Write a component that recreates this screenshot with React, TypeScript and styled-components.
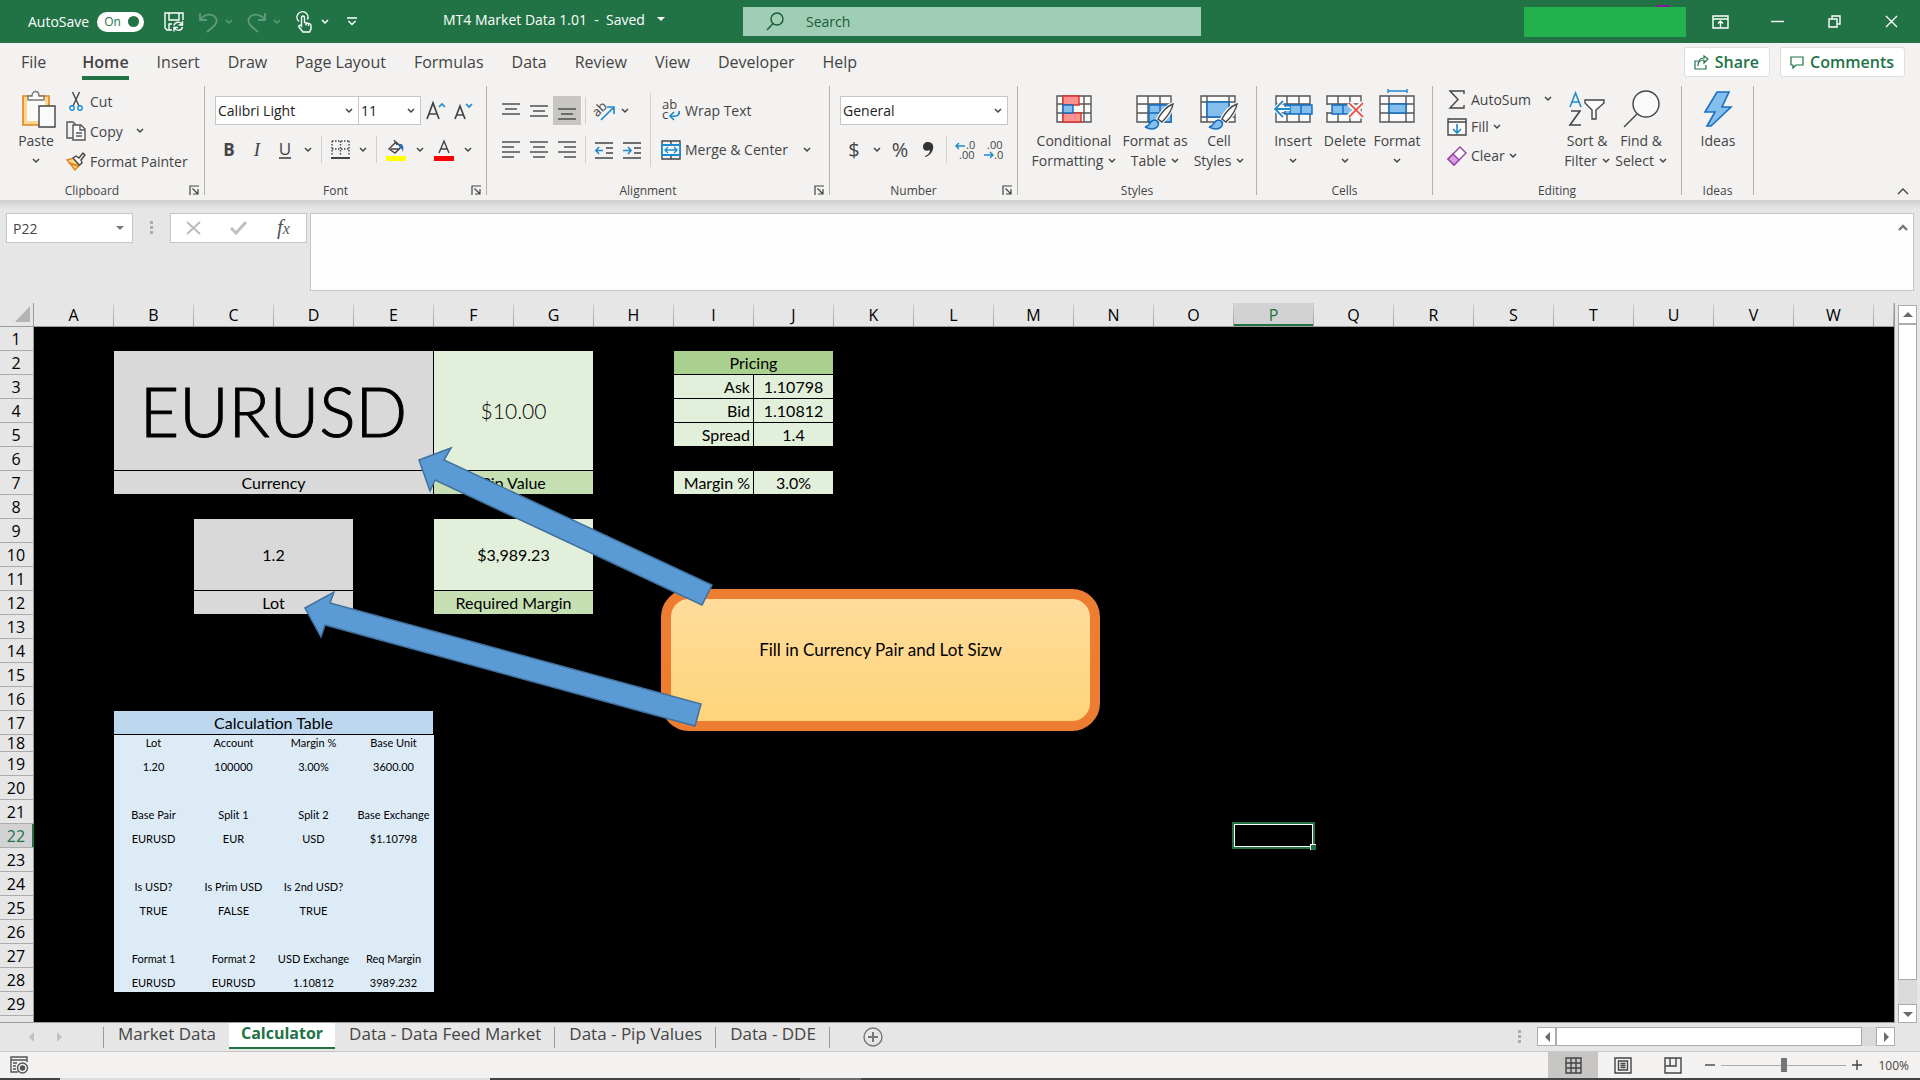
import React from "react";
import styled, { createGlobalStyle, css } from "styled-components";

const UI = `"Open Sans", "Noto Sans", sans-serif`;
const SHEET = `Lato, "Open Sans", sans-serif`;
const GREEN = "#217346";
const INK = "#444444";
const BLUE = "#1e8bcd";
const LINE = "#9b9b9b";

const GlobalStyle = createGlobalStyle`
  *, *::before, *::after { box-sizing: border-box; }
  body { margin: 0; background: #e6e6e6; font-family: ${UI}; color: ${INK}; }
  button, input, select, textarea { font: inherit; color: inherit; margin: 0; }
  button { border: 0; padding: 0; background: none; cursor: default; }
  svg { display: block; flex: none; overflow: visible; }
`;

const Window = styled.div`
  display: flex;
  flex-direction: column;
  height: 100vh;
  overflow: hidden;
`;

/* ---------- title bar ---------- */

const TitleBar = styled.header`
  display: grid;
  grid-template-columns: 443fr 300fr 458fr 719fr;
  align-items: center;
  flex: none;
  height: 43px;
  background: ${GREEN};
  color: #fff;
  font-size: 14px;
`;

const QuickAccess = styled.div`
  display: flex;
  align-items: center;
  gap: 6px;
  height: 43px;
  padding-left: 28px;
`;

const QuickGroup = styled.div`
  display: flex;
`;

const ToggleLabel = styled.label`
  display: flex;
  align-items: center;
  gap: 8px;
  margin-right: 10px;
`;

const Toggle = styled.span`
  display: flex;
  align-items: center;
  justify-content: space-between;
  width: 47px;
  height: 20px;
  padding: 0 5px 0 7px;
  border-radius: 10px;
  background: #fff;
  color: ${GREEN};
  font-size: 12px;
  input {
    appearance: none;
    width: 11px;
    height: 11px;
    margin: 0;
    border-radius: 50%;
    background: ${GREEN};
  }
`;

const QuickButton = styled.button<{ $w?: number; $dim?: boolean }>`
  display: flex;
  align-items: center;
  justify-content: center;
  width: ${(p) => p.$w ?? 28}px;
  height: 32px;
  opacity: ${(p) => (p.$dim ? 0.28 : 1)};
`;

const DocTitle = styled.button`
  display: flex;
  align-items: center;
  gap: 12px;
  white-space: pre;
  padding-bottom: 4px;
`;

const SearchBox = styled.label`
  display: flex;
  align-items: center;
  gap: 20px;
  height: 29px;
  padding-left: 23px;
  background: #a0cdb5;
  color: #185c37;
  input {
    flex: 1;
    min-width: 0;
    border: 0;
    outline: 0;
    background: none;
  }
  input::placeholder { color: #185c37; opacity: 1; }
`;

const WindowControls = styled.div`
  display: flex;
  justify-content: flex-end;
  align-items: center;
`;

const Account = styled.button`
  position: relative;
  width: 162px;
  height: 30px;
  margin-right: 6px;
  background: #22b14c;
  &::before {
    content: "";
    position: absolute;
    left: 132px;
    top: -2px;
    width: 14px;
    height: 2px;
    border-radius: 7px 7px 0 0;
    background: #881798;
  }
`;

const ControlButton = styled.button`
  display: flex;
  align-items: center;
  justify-content: center;
  width: 57px;
  height: 43px;
`;

/* ---------- ribbon ---------- */

const Ribbon = styled.section`
  flex: none;
  background: #f3f2f1;
`;

const TabRow = styled.nav`
  display: flex;
  align-items: center;
  height: 41px;
  padding: 0 15px 0 21px;
  gap: 28px;
  font-size: 16px;
`;

const RibbonTab = styled.a<{ $active?: boolean; $first?: boolean }>`
  display: block;
  height: 32px;
  margin-right: ${(p) => (p.$first ? 8 : 0)}px;
  line-height: 28px;
  color: ${INK};
  text-decoration: none;
  white-space: nowrap;
  ${(p) =>
    p.$active &&
    css`
      font-weight: 600;
      border-bottom: 4px solid ${GREEN};
    `}
`;

const TabActions = styled.div`
  display: flex;
  gap: 10px;
  margin-left: auto;
`;

const ActionButton = styled.button`
  display: flex;
  align-items: center;
  gap: 6px;
  height: 30px;
  padding: 0 10px 0 9px;
  border: 1px solid #e1dfdd;
  border-radius: 3px;
  background: #fff;
  color: ${GREEN};
  font-weight: 600;
  margin-bottom: 3px;
`;

const Groups = styled.div`
  display: flex;
  height: 116px;
  padding-top: 2px;
`;

const Group = styled.section<{ $w: number }>`
  display: flex;
  flex-direction: column;
  flex: none;
  width: ${(p) => p.$w}px;
  height: 109px;
  border-right: 1px solid #b3b0ad;
`;

const GroupBody = styled.div<{ $pad?: number }>`
  display: flex;
  flex: 1;
  align-items: flex-start;
  padding-left: ${(p) => p.$pad ?? 0}px;
`;

const GroupFoot = styled.footer<{ $launch?: boolean }>`
  display: grid;
  grid-template-columns: ${(p) => (p.$launch ? "1fr 20px" : "1fr")};
  grid-template-rows: 14px;
  align-items: start;
  height: 14px;
  line-height: 20px;
  font-size: 12px;
  text-align: center;
`;

const LaunchButton = styled.button`
  display: flex;
  justify-content: center;
  align-items: flex-end;
  height: 14px;
`;

const Stack = styled.div<{ $top?: number; $gap?: number; $left?: number }>`
  display: flex;
  flex-direction: column;
  gap: ${(p) => p.$gap ?? 0}px;
  padding-top: ${(p) => p.$top ?? 0}px;
  padding-left: ${(p) => p.$left ?? 0}px;
`;

const Row = styled.div<{ $h?: number }>`
  display: flex;
  align-items: center;
  height: ${(p) => p.$h ?? 29}px;
`;

const LargeButton = styled.button<{ $w: number }>`
  display: flex;
  flex-direction: column;
  align-items: center;
  width: ${(p) => p.$w}px;
  font-size: 14px;
  line-height: 20px;
  white-space: nowrap;
`;

const LargeIcon = styled.span`
  display: flex;
  align-items: center;
  justify-content: center;
  height: 45px;
`;

const LabelLine = styled.span`
  display: flex;
  align-items: center;
  justify-content: center;
  gap: 5px;
  height: 20px;
`;

const SmallButton = styled.button<{ $h: number }>`
  display: flex;
  align-items: center;
  gap: 4px;
  height: ${(p) => p.$h}px;
  font-size: 14px;
  white-space: nowrap;
`;

const IconSlot = styled.span`
  display: flex;
  align-items: center;
  justify-content: center;
  width: 20px;
`;

const ToolButton = styled.button<{ $w?: number; $on?: boolean }>`
  display: flex;
  align-items: center;
  justify-content: center;
  width: ${(p) => p.$w ?? 28}px;
  height: 29px;
  background: ${(p) => (p.$on ? "#c8c6c4" : "none")};
`;

const Divider = styled.span<{ $h?: number }>`
  flex: none;
  width: 1px;
  height: ${(p) => p.$h ?? 27}px;
  margin: 0 4px;
  background: #d2d0ce;
`;

const Glyph = styled.span<{ $kind: "bold" | "italic" | "underline" | "symbol" }>`
  font-size: ${(p) => (p.$kind === "symbol" ? 20 : 17)}px;
  line-height: 22px;
  font-weight: ${(p) => (p.$kind === "bold" ? 700 : 400)};
  ${(p) => p.$kind === "italic" && css`font-family: "Liberation Serif", serif; font-style: italic; font-size: 19px;`}
  ${(p) => p.$kind === "underline" && css`line-height: 17px; border-bottom: 2px solid #666;`}
`;

const Combo = styled.label<{ $w: number }>`
  display: grid;
  grid-template-columns: 1fr 18px;
  align-items: center;
  width: ${(p) => p.$w}px;
  height: 29px;
  border: 1px solid #c8c6c4;
  background: #fff;
  color: #222;
  font-size: 14px;
  & + & { border-left: 0; }
  select {
    grid-area: 1 / 1 / 2 / 3;
    width: 100%;
    height: 27px;
    padding: 0 0 0 2px;
    appearance: none;
    border: 0;
    background: none;
  }
  svg { grid-area: 1 / 2 / 2 / 3; justify-self: center; pointer-events: none; }
`;

const CollapseButton = styled.button`
  align-self: flex-end;
  margin: 0 11px 5px auto;
`;

/* ---------- formula bar ---------- */

const FormulaBar = styled.div`
  display: flex;
  align-items: flex-start;
  flex: none;
  height: 103px;
  padding: 13px 6px 0 6px;
  background: linear-gradient(#cfcfcf, #e6e6e6 9px);
`;

const NameBox = styled.label`
  display: flex;
  align-items: center;
  width: 127px;
  height: 30px;
  padding: 0 8px 0 6px;
  border: 1px solid #c6c6c6;
  background: #fff;
  font-size: 14px;
  input { flex: 1; width: 60px; padding: 0; border: 0; background: none; }
`;

const Grip = styled.span<{ $m: number }>`
  width: 3px;
  height: 13px;
  margin: 0 ${(p) => p.$m}px;
  background: repeating-linear-gradient(#ababab 0 3px, transparent 3px 5px);
`;

const FormulaButtons = styled.div`
  display: flex;
  align-items: center;
  width: 137px;
  height: 30px;
  border: 1px solid #c6c6c6;
  background: #fff;
  button { flex: 1; display: flex; justify-content: center; }
`;

const FormulaInput = styled.div`
  display: flex;
  flex: 1;
  height: 78px;
  margin-left: 3px;
  border: 1px solid #c6c6c6;
  background: #fdfdfd;
  textarea { flex: 1; border: 0; background: none; resize: none; outline: 0; }
  button { align-self: flex-start; margin: 10px 5px; }
`;

const Functions = styled.span`
  font: italic 400 21px/22px "Liberation Serif", serif;
  color: #555;
  small { font-size: 16px; }
`;

/* ---------- sheet ---------- */

const Workspace = styled.main`
  display: flex;
  flex: 1;
  min-height: 0;
`;

const SheetArea = styled.div`
  position: relative;
  flex: 1;
  min-width: 0;
  overflow: hidden;
  background: #000;
  border-right: 1px solid ${LINE};
  border-bottom: 1px solid ${LINE};
`;

const Grid = styled.table`
  width: 100%;
  table-layout: fixed;
  border-collapse: separate;
  border-spacing: 0;
  font-family: ${SHEET};
  color: #000;
`;

const headBase = css`
  padding: 0;
  background-color: #e6e6e6;
  font-family: ${UI};
  font-weight: 400;
  font-size: 16px;
  line-height: 20px;
`;

const Corner = styled.th`
  ${headBase}
  border-right: 1px solid ${LINE};
  border-bottom: 1px solid ${LINE};
  svg { margin: 0 3px 1px auto; }
`;

const ColumnHead = styled.th<{ $on: boolean }>`
  ${headBase}
  height: 24px;
  border-right: 1px solid;
  border-image: linear-gradient(#d4d4d4, ${LINE}) 1;
  border-bottom: 1px solid ${LINE};
  ${(p) =>
    p.$on &&
    css`
      background-color: #d2d2d2;
      color: ${GREEN};
      box-shadow: inset 0 -2px ${GREEN};
    `}
`;

const RowHead = styled.th<{ $on: boolean }>`
  ${headBase}
  line-height: 16px;
  padding-right: 1px;
  border-right: 1px solid ${LINE};
  border-bottom: 1px solid #ababab;
  ${(p) =>
    p.$on &&
    css`
      background-color: #d2d2d2;
      color: ${GREEN};
      box-shadow: inset -1px 0 ${GREEN};
      border-right-color: ${GREEN};
    `}
`;

const SheetRow = styled.tr<{ $h: number }>`
  height: ${(p) => p.$h}px;
`;

type Tone = "grey" | "mint" | "leaf" | "moss" | "sky" | "ice";
const TONES: Record<Tone, string> = {
  grey: "#d9d9d9",
  mint: "#e2efda",
  leaf: "#c6e0b4",
  moss: "#a9d08e",
  sky: "#bdd7ee",
  ice: "#ddebf7",
};

const SIZES = {
  small: css`font-size: 11px; line-height: 16px;`,
  normal: css`font-size: 16px; line-height: 22px;`,
  large: css`font-size: 21px; line-height: 30px; font-weight: 300;`,
  huge: css`font-size: 68px; line-height: 80px; font-weight: 300; -webkit-text-stroke: 1px #000;`,
};

const Cell = styled.td<{ $tone?: Tone; $size?: keyof typeof SIZES; $align?: string; $mid?: boolean }>`
  position: relative;
  padding: 0 3px;
  white-space: nowrap;
  font-weight: 400;
  text-align: ${(p) => p.$align ?? "center"};
  vertical-align: ${(p) => (p.$mid ? "middle" : "bottom")};
  border-right: 1px solid #000;
  border-bottom: 1px solid #000;
  ${(p) => SIZES[p.$size ?? "normal"]}
  ${(p) => p.$tone && css`background: ${TONES[p.$tone]};`}
  ${(p) => p.$tone === "ice" && css`padding: 0; border-color: ${TONES.ice};`}
`;

const Selection = styled.div`
  position: absolute;
  inset: -2px;
  z-index: 1;
  border: 2px solid ${GREEN};
  box-shadow: inset 0 0 0 1px #fff;
  &::after {
    content: "";
    position: absolute;
    right: -3px;
    bottom: -3px;
    width: 6px;
    height: 6px;
    background: ${GREEN};
    border-left: 1px solid #fff;
    border-top: 1px solid #fff;
  }
`;

const Callout = styled.div`
  position: absolute;
  left: 661px;
  top: 286px;
  width: 439px;
  height: 142px;
  padding-top: 41px;
  border: 10px solid #ed7d31;
  border-radius: 28px;
  background: linear-gradient(#ffdc9b, #ffd47b);
  color: #000;
  font: 17px/20px ${SHEET};
  text-align: center;
`;

const Arrows = styled.svg`
  position: absolute;
  left: 0;
  top: 0;
`;

const ScrollColumn = styled.div`
  display: flex;
  flex-direction: column;
  width: 19px;
  margin: 2px 3px 0 3px;
  background: #dadada;
`;

const ScrollButton = styled.button`
  display: flex;
  align-items: center;
  justify-content: center;
  flex: none;
  width: 19px;
  height: 19px;
  border: 1px solid #ababab;
  background: #fff;
`;

const ScrollThumb = styled.div<{ $grow: number }>`
  flex: ${(p) => p.$grow};
  border: 1px solid #ababab;
  background: #fff;
`;

const ScrollGap = styled.div<{ $grow: number }>`
  flex: ${(p) => p.$grow};
`;

/* ---------- sheet tabs and status bar ---------- */

const BottomBar = styled.div`
  display: flex;
  flex: none;
  height: 28px;
`;

const TabNav = styled.div`
  display: flex;
  justify-content: space-between;
  align-items: center;
  width: 64px;
  margin-right: 39px;
  padding-left: 26px;
`;

const SheetTabs = styled.nav`
  display: flex;
  align-items: flex-start;
`;

const TabRule = styled.span`
  width: 1px;
  height: 21px;
  margin-top: 4px;
  background: ${LINE};
`;

const SheetTab = styled.a<{ $active?: boolean }>`
  height: 26px;
  padding: 0 13px 0 14px;
  font-size: 17px;
  line-height: 21px;
  color: ${INK};
  text-decoration: none;
  white-space: nowrap;
  ${(p) =>
    p.$active &&
    css`
      padding: 0 12px;
      background: #fff;
      color: ${GREEN};
      font-size: 16px;
      font-weight: 700;
      border-bottom: 2px solid ${GREEN};
    `}
`;

const AddSheet = styled.button`
  margin-left: 33px;
`;

const HorizontalScroll = styled.div`
  display: flex;
  align-items: center;
  gap: 16px;
  margin: 4px 25px 5px auto;
  width: 377px;
`;

const HorizontalTrack = styled.div`
  display: flex;
  flex: 1;
  height: 19px;
  background: #dadada;
`;

const StatusBar = styled.footer`
  display: flex;
  align-items: center;
  flex: none;
  height: 27px;
  padding: 0 11px 0 10px;
  border-top: 1px solid #c6c6c6;
  background: #f3f2f1;
  font-size: 12px;
`;

const ViewButtons = styled.div`
  display: flex;
  margin: 0 7px 0 auto;
`;

const ViewButton = styled.button<{ $on?: boolean }>`
  display: flex;
  align-items: center;
  justify-content: center;
  width: 50px;
  height: 26px;
  background: ${(p) => (p.$on ? "#c8c6c4" : "none")};
`;

const Zoom = styled.label`
  display: flex;
  align-items: center;
  gap: 6px;
  input {
    appearance: none;
    width: 125px;
    height: 14px;
    background: linear-gradient(#ababab, #ababab) center / 100% 1px no-repeat;
  }
  input::-webkit-slider-thumb {
    appearance: none;
    width: 6px;
    height: 14px;
    background: #767676;
  }
`;

const ZoomLevel = styled.button`
  margin-left: 16px;
`;

const Taskbar = styled.div`
  flex: none;
  height: 2px;
  background: linear-gradient(90deg, #444 60px, #ddd 60px 490px, #444 490px 800px, #6b6b6b 800px 861px, #444 861px);
`;

/* ---------- drawings ---------- */

const Svg = ({ w, h, children, ...rest }: any) => (
  <svg width={w} height={h} viewBox={`0 0 ${w} ${h}`} fill="none" stroke={INK} strokeWidth={1.4} aria-hidden="true" {...rest}>
    {children}
  </svg>
);

const Chevron = ({ color = INK }: { color?: string }) => (
  <Svg w={8} h={6} stroke={color}><path d="M1 1l3 3 3-3" strokeWidth={1.5} /></Svg>
);

const Triangle = ({ dir, color = "#6b6b6b" }: { dir: "up" | "down" | "left" | "right"; color?: string }) => {
  const d = { up: "M0 7l5-5 5 5z", down: "M0 3l5 5 5-5z", left: "M8 0L3 5l5 5z", right: "M3 0l5 5-5 5z" }[dir];
  return <Svg w={10} h={10} stroke="none"><path d={d} fill={color} /></Svg>;
};

const SaveIcon = () => (
  <Svg w={20} h={20} stroke="#fff">
    <path d="M8 18H3l-2-2V1h18v7M5 1v7h10V1M5 18v-6h3" />
    <path d="M18.500 9v4h-4M10 13.500c1-4 6-4.500 8-1M10 19.500v-4h4M18.500 15c-1 4-6 4.500-8 1" />
  </Svg>
);
const UndoIcon = ({ flip }: { flip?: boolean }) => (
  <Svg w={19} h={20} stroke="#fff" strokeWidth={1.8}>
    <g transform={flip ? "translate(19 0) scale(-1 1)" : undefined}>
      <path d="M1 1v7h7M1 8C4 3 11 1 15 4c4 3 3 7 0 10l-7 6" />
    </g>
  </Svg>
);
const TouchIcon = () => (
  <Svg w={16} h={22} stroke="#fff">
    <path d="M3 10.500A5.500 5.500 0 1 1 11.500 8.500" />
    <path d="M5.500 13.500V6.500a1.500 1.500 0 0 1 3 0v5l5 1.200c1 .3 1.500.8 1.500 2V18l-1.500 3H7l-4-5c-1-1.500 1-2.500 2.500-1zM10 12v2.500M12.500 13v2" />
  </Svg>
);
const PasteIcon = () => (
  <Svg w={40} h={38}>
    <g transform="translate(6 0)">
      <path d="M1 6h26v29H1z" fill="#fbd88f" stroke="#e3821f" strokeWidth={1.6} />
      <path d="M5 9h18v22H5z" fill="#fafafa" stroke="none" />
      <path d="M6 10V6h4c0-6 7-6 7 0h5v4z" fill="#fafafa" stroke="#777" />
      <path d="M17 16h16v21H17z" fill="#fafafa" stroke="#444" />
    </g>
  </Svg>
);
const CutIcon = () => (
  <Svg w={14} h={20}>
    <path d="M3.500 1l6.500 14M10.500 1L4 15" />
    <circle cx="3" cy="17" r="2.200" stroke={BLUE} /><circle cx="11" cy="17" r="2.200" stroke={BLUE} />
  </Svg>
);
const CopyIcon = () => (
  <Svg w={20} h={20} stroke="#555">
    <path d="M7 17H1V1h6l3 3" /><path d="M7 4h8l4 4v11H7z" fill="#fafafa" /><path d="M14 4v5h5M10 12h6M10 15h6" />
  </Svg>
);
const BrushIcon = () => (
  <Svg w={20} h={19}>
    <path d="M1 8l7-2 6 7-5 5z" fill="#fbd88f" stroke="#e3821f" /><path d="M3 11l9 3" stroke="#e3821f" strokeWidth={2} />
    <path d="M7 6l3-2 3 2 4-5 2 2-4 5 1 3-3 2z" fill="#fafafa" />
  </Svg>
);
const GrowFont = ({ shrink }: { shrink?: boolean }) => (
  <Svg w={19} h={18}>
    {shrink ? <path d="M1 17L6 4l5 13M3 13h6" strokeWidth={1.7} /> : <path d="M1 17L7 1l6 16M3 12h8" strokeWidth={1.7} />}
    <path d={shrink ? "M12 2l3 3 3-3" : "M13 5l3-3 3 3"} stroke={BLUE} strokeWidth={1.7} />
  </Svg>
);
const BordersIcon = () => (
  <Svg w={19} h={19}>
    <path d="M1 1h17M1 9h17M1 1v15M9.500 1v15M18 1v15" strokeDasharray="1.500 1.500" /><path d="M0 18h19" strokeWidth={2} />
  </Svg>
);
const FillColor = () => (
  <Svg w={20} h={22}>
    <path d="M3 10l7-7 5 5-6 6zM8 1l3 5M5 10h9" fill="#fafafa" /><path d="M12 5c5-1 6 2 5 8-1-3-2-4-3-4z" fill="#2b6cb0" stroke="none" />
    <path d="M0 17h20v5H0z" fill="#ff0" stroke="none" />
  </Svg>
);
const FontColor = () => (
  <Svg w={20} h={22}><path d="M5 14L10 2l5 12M7 10h6" /><path d="M0 17h20v5H0z" fill="#f00" stroke="none" /></Svg>
);
const Lines = ({ rows }: { rows: number[][] }) => (
  <Svg w={18} h={18}>{rows.map(([y, a, b]) => <path key={y} d={`M${a} ${y}h${b - a}`} />)}</Svg>
);
const OrientIcon = () => (
  <Svg w={22} h={20}>
    <g transform="rotate(-45 7 8)"><text x="-1" y="12" fontSize="13" fill={INK} stroke="none" fontFamily="Open Sans">ab</text></g>
    <path d="M8 19L20 7M14 6h7v7" stroke={BLUE} strokeWidth={1.7} />
  </Svg>
);
const IndentIcon = ({ right }: { right?: boolean }) => (
  <Svg w={18} h={18}>
    <path d="M0 2h18M11 7h7M11 12h7M0 17h18" />
    <path d={right ? "M0 9.500h8M5 6l3 3.500-3 3.500" : "M0 9.500h8M4 6L1 9.500 4 13"} stroke={BLUE} strokeWidth={1.6} />
  </Svg>
);
const WrapIcon = () => (
  <Svg w={18} h={21}>
    <g fill={INK} stroke="none" fontSize="13" fontFamily="Open Sans"><text x="0" y="9">ab</text><text x="0" y="19">c</text></g>
    <path d="M17 11c1 4-2 6-8 5M12 12l-4 4 4 4" stroke={BLUE} strokeWidth={1.7} />
  </Svg>
);
const MergeIcon = () => (
  <Svg w={20} h={20}>
    <path d="M1 1h18v18H1zM10 1v4M10 15v4" /><path d="M1 5h18v10H1z" fill="#fafafa" stroke={BLUE} strokeWidth={1.8} />
    <path d="M4 10h12M7 7l-3 3 3 3M13 7l3 3-3 3" stroke={BLUE} />
  </Svg>
);
const DecimalIcon = ({ less }: { less?: boolean }) => (
  <Svg w={20} h={20}>
    <g fill={INK} stroke="none" fontSize="11" fontFamily="Open Sans">
      <text x={less ? 4 : 11} y="9">{less ? ".00" : ".0"}</text><text x={less ? 11 : 4} y="19">{less ? ".0" : ".00"}</text>
    </g>
    <path d={less ? "M1 15h9M7 12l3 3-3 3" : "M1 6h9M4 3L1 6l3 3"} stroke={BLUE} />
  </Svg>
);
const TableBase = ({ x = 1 }: { x?: number }) => (
  <path d={`M${x} 1h34v26h-34zM${x} 9h34M${x} 18h34M${x + 11} 1v26M${x + 23} 1v26`} fill="#fafafa" stroke="#555" />
);
const Brush = () => (
  <>
    <path d="M37 9c-6 2-12 9-15 15l4 3c5-5 10-12 11-18z" fill="#fafafa" stroke="#f3f2f1" strokeWidth={4} />
    <path d="M37 9c-6 2-12 9-15 15l4 3c5-5 10-12 11-18z" fill="#fafafa" />
    <path d="M9 32c5 0 4-6 9-7 4 0 6 4 3 7-3 3-8 2-12 0z" fill="#83beec" stroke="#0f6cbd" />
  </>
);
const ConditionalIcon = () => (
  <Svg w={36} h={28}>
    <path d="M1 1h34v26H1zM1 9h34M1 18h34M7 1v26M28 1v26" fill="#fafafa" stroke="#555" />
    <path d="M7 1h16v9H7zM7 18h18v9H7z" fill="#ff9191" stroke="#d8352a" /><path d="M7 10h10v8H7z" fill="#83beec" stroke="#0f6cbd" />
  </Svg>
);
const FormatTableIcon = () => (
  <Svg w={38} h={28}><TableBase /><path d="M13 10h22v17H13z" fill="#83beec" stroke="#0f6cbd" /><path d="M24 10v17M13 18h22" stroke="#0f6cbd" /><Brush /></Svg>
);
const CellStylesIcon = () => (
  <Svg w={38} h={28}>
    <path d="M1 1h34v26H1zM1 7h34M1 22h34M7 1v26M29 1v26" fill="#fafafa" stroke="#555" /><path d="M7 7h22v15H7z" fill="#83beec" stroke="#0f6cbd" /><Brush />
  </Svg>
);
const InsertIcon = () => (
  <Svg w={40} h={28}>
    <TableBase x={3} /><path d="M12 10h27v9H12zM17 10v9M28 10v9" fill="#83beec" stroke="#0f6cbd" />
    <path d="M17 14H2M10 6l-8 8 8 8" stroke="#fff" strokeWidth={4} /><path d="M17 14H2M10 6l-8 8 8 8" stroke={BLUE} strokeWidth={1.8} />
  </Svg>
);
const DeleteIcon = () => (
  <Svg w={38} h={28}>
    <TableBase /><path d="M6 10h20v9H6zM17 10v9" fill="#83beec" stroke="#0f6cbd" /><path d="M0 10h5v7H0z" fill="#f3f2f1" stroke="none" />
    <path d="M23 8l14 14M37 8L23 22" stroke="#f3f2f1" strokeWidth={6} /><path d="M23 8l14 14M37 8L23 22" stroke="#e8443a" strokeWidth={1.7} />
  </Svg>
);
const FormatIcon = () => (
  <Svg w={36} h={42}>
    <path d="M9 3h19M9 1v4M28 1v4" stroke={BLUE} />
    <path d="M1 8h34v26H1zM1 16h34M1 25h34M10 8v26M27 8v26" fill="#fafafa" stroke="#555" /><path d="M10 16h17v9H10z" fill="#83beec" stroke="#0f6cbd" />
  </Svg>
);
const SigmaIcon = () => <Svg w={18} h={19}><path d="M16 4V1H2l8 8.500L2 18h14v-3" /></Svg>;
const FillIcon = () => (
  <Svg w={20} h={18}><path d="M1 1h18v16H1zM1 4h18" fill="#fafafa" /><path d="M10 6v9M6 11l4 4 4-4" stroke={BLUE} strokeWidth={1.6} /></Svg>
);
const EraserIcon = () => (
  <Svg w={20} h={20} stroke="#9a3fa8"><path d="M1 13L13 1l6 6L7 19z" fill="#fafafa" /><path d="M1 13l5-5 6 6-5 5z" fill="#d9a0e0" /></Svg>
);
const SortIcon = () => (
  <Svg w={36} h={36}>
    <path d="M1 16L6.500 2 12 16M3 11h7" stroke={BLUE} strokeWidth={1.6} /><path d="M2 20h9L1 34h11" strokeWidth={1.6} />
    <path d="M16 9h19v3l-8 7v9h-4v-9l-7-7z" fill="#fafafa" />
  </Svg>
);
const FindIcon = () => <Svg w={37} h={38}><circle cx="23" cy="14" r="13" fill="#fafafa" /><path d="M14 24L1 37" /></Svg>;
const BoltIcon = () => (
  <Svg w={28} h={36}><path d="M13 1h12l-7 15h9L7 35H3l8-14H1z" fill="#83beec" stroke="#1770c0" strokeWidth={1.6} /></Svg>
);
const LaunchIcon = () => <Svg w={10} h={10}><path d="M1 10V1h9M3.500 3.500L9 9M9 4v5H4" strokeWidth={1.2} /></Svg>;

/* ---------- sheet data ---------- */

type CellData = {
  v: string;
  cols?: number;
  rows?: number;
  tone: Tone;
  size?: keyof typeof SIZES;
  align?: string;
  mid?: boolean;
};

const COLUMNS = "ABCDEFGHIJKLMNOPQRSTUVW".split("");
const CELLS: Record<string, CellData> = {
  B2: { v: "EURUSD", cols: 4, rows: 5, tone: "grey", size: "huge", mid: true },
  F2: { v: "$10.00", cols: 2, rows: 5, tone: "mint", size: "large", mid: true },
  B7: { v: "Currency", cols: 4, tone: "grey" },
  F7: { v: "Pip Value", cols: 2, tone: "leaf" },
  I2: { v: "Pricing", cols: 2, tone: "moss" },
  I3: { v: "Ask", tone: "mint", align: "right" },
  J3: { v: "1.10798", tone: "mint" },
  I4: { v: "Bid", tone: "mint", align: "right" },
  J4: { v: "1.10812", tone: "mint" },
  I5: { v: "Spread", tone: "mint", align: "right" },
  J5: { v: "1.4", tone: "mint" },
  I7: { v: "Margin %", tone: "mint", align: "right" },
  J7: { v: "3.0%", tone: "mint" },
  C9: { v: "1.2", cols: 2, rows: 3, tone: "grey", mid: true },
  F9: { v: "$3,989.23", cols: 2, rows: 3, tone: "mint", mid: true },
  C12: { v: "Lot", cols: 2, tone: "grey" },
  F12: { v: "Required Margin", cols: 2, tone: "leaf" },
  B17: { v: "Calculation Table", cols: 4, tone: "sky" },
};

const CALC: string[][] = [
  ["Lot", "Account", "Margin %", "Base Unit"],
  ["1.20", "100000", "3.00%", "3600.00"],
  [],
  ["Base Pair", "Split 1", "Split 2", "Base Exchange"],
  ["EURUSD", "EUR", "USD", "$1.10798"],
  [],
  ["Is USD?", "Is Prim USD", "Is 2nd USD?", ""],
  ["TRUE", "FALSE", "TRUE", ""],
  [],
  ["Format 1", "Format 2", "USD Exchange", "Req Margin"],
  ["EURUSD", "EURUSD", "1.10812", "3989.232"],
];
CALC.forEach((row, r) =>
  ["B", "C", "D", "E"].forEach((c, i) => {
    CELLS[`${c}${18 + r}`] = { v: row[i] ?? "", tone: "ice", size: "small" };
  })
);

const COVERED = new Set<string>();
Object.entries(CELLS).forEach(([key, cell]) => {
  const c0 = COLUMNS.indexOf(key[0]);
  const r0 = Number(key.slice(1));
  for (let r = r0; r < r0 + (cell.rows ?? 1); r++)
    for (let c = c0; c < c0 + (cell.cols ?? 1); c++) if (r !== r0 || c !== c0) COVERED.add(`${COLUMNS[c]}${r}`);
});

const ROWS = Array.from({ length: 30 }, (_, i) => i + 1);
const SHORT_ROW = 18;
const SELECTED = { col: "P", row: 22 };

function Spreadsheet() {
  return (
    <SheetArea>
      <Grid>
        <colgroup>
          <col width={34} />
          {COLUMNS.map((c) => <col key={c} width={80} />)}
          <col />
        </colgroup>
        <thead>
          <tr>
            <Corner aria-label="Select all"><Svg w={15} h={16} stroke="none"><path d="M15 0v16H0z" fill="#b4b4b4" /></Svg></Corner>
            {COLUMNS.map((c) => <ColumnHead key={c} scope="col" $on={c === SELECTED.col}>{c}</ColumnHead>)}
            <ColumnHead $on={false} />
          </tr>
        </thead>
        <tbody>
          {ROWS.map((r) => (
            <SheetRow key={r} $h={r === SHORT_ROW ? 17 : 24}>
              <RowHead scope="row" $on={r === SELECTED.row}>{r < 30 ? r : ""}</RowHead>
              {COLUMNS.map((c) => {
                const key = `${c}${r}`;
                if (COVERED.has(key)) return null;
                const d = CELLS[key];
                if (!d) return <Cell key={key}>{c === SELECTED.col && r === SELECTED.row && <Selection />}</Cell>;
                return (
                  <Cell key={key} colSpan={d.cols} rowSpan={d.rows} $tone={d.tone} $size={d.size} $align={d.align} $mid={d.mid}>
                    {d.v}
                  </Cell>
                );
              })}
              <Cell />
            </SheetRow>
          ))}
        </tbody>
      </Grid>
      <Callout>Fill in Currency Pair and Lot Sizw</Callout>
      <Arrows width="720" height="440" viewBox="0 0 720 440" fill="#5b9bd5" stroke="#41719c" strokeWidth="1.5" aria-hidden="true">
        <path d="M419 157l32-12-7 12 268 125-10 20-267-125-5 11z" />
        <path d="M305 305l29-16-4 11 371 101-6 22-370-101-4 12z" />
      </Arrows>
    </SheetArea>
  );
}

const Drop = ({ label, w = 18 }: { label: string; w?: number }) => (
  <ToolButton $w={w} aria-label={label}><Chevron /></ToolButton>
);

const QuickDrop = ({ label, dim }: { label: string; dim?: boolean }) => (
  <QuickButton $w={14} $dim={dim} aria-label={label}><Chevron color="#fff" /></QuickButton>
);

const Large = ({ w, icon, lines, drop }: { w: number; icon: React.ReactNode; lines: string[]; drop?: boolean }) => (
  <LargeButton $w={w}>
    <LargeIcon>{icon}</LargeIcon>
    {lines.map((t, i) => (
      <LabelLine key={i}>{t}{drop && i === lines.length - 1 && <Chevron />}</LabelLine>
    ))}
  </LargeButton>
);

const Foot = ({ name, launch }: { name: string; launch?: boolean }) => (
  <GroupFoot $launch={launch}>
    <span>{name}</span>
    {launch && <LaunchButton aria-label={`${name} settings`}><LaunchIcon /></LaunchButton>}
  </GroupFoot>
);

const TABS = ["File", "Home", "Insert", "Draw", "Page Layout", "Formulas", "Data", "Review", "View", "Developer", "Help"];

export default function App() {
  return (
    <Window>
      <GlobalStyle />
      <TitleBar>
        <QuickAccess>
          <ToggleLabel>
            AutoSave
            <Toggle>On<input type="checkbox" role="switch" defaultChecked aria-label="AutoSave" /></Toggle>
          </ToggleLabel>
          <QuickButton aria-label="Save"><SaveIcon /></QuickButton>
          <QuickGroup>
            <QuickButton $dim aria-label="Undo"><UndoIcon /></QuickButton>
            <QuickDrop dim label="Undo list" />
          </QuickGroup>
          <QuickGroup>
            <QuickButton $dim aria-label="Redo"><UndoIcon flip /></QuickButton>
            <QuickDrop dim label="Redo list" />
          </QuickGroup>
          <QuickGroup>
            <QuickButton aria-label="Touch mode"><TouchIcon /></QuickButton>
            <QuickDrop label="Touch mode list" />
          </QuickGroup>
          <QuickButton aria-label="Customize toolbar">
            <Svg w={10} h={9} stroke="#fff"><path d="M0 1h10M1.500 4L5 7.500 8.500 4" /></Svg>
          </QuickButton>
        </QuickAccess>
        <DocTitle>MT4 Market Data 1.01  -  Saved<Svg w={8} h={5} stroke="none"><path d="M0 0h8L4 4z" fill="#fff" /></Svg></DocTitle>
        <SearchBox>
          <Svg w={18} h={19} stroke="#185c37"><circle cx="11" cy="7" r="6" /><path d="M7 11.500L1 18" /></Svg>
          <input type="search" placeholder="Search" aria-label="Search" />
        </SearchBox>
        <WindowControls>
          <Account aria-label="Account" />
          <ControlButton aria-label="Ribbon display options">
            <Svg w={17} h={14} stroke="#fff"><path d="M1 1h15v12H1zM1 4h15M8.500 12V6M6 8.500L8.500 6 11 8.500" /></Svg>
          </ControlButton>
          <ControlButton aria-label="Minimize"><Svg w={13} h={3} stroke="#fff"><path d="M0 1.500h13" /></Svg></ControlButton>
          <ControlButton aria-label="Restore"><Svg w={13} h={13} stroke="#fff"><path d="M1 4h8v8H1zM4 4V1h8v8H9" /></Svg></ControlButton>
          <ControlButton aria-label="Close"><Svg w={13} h={13} stroke="#fff"><path d="M1 1l11 11M12 1L1 12" /></Svg></ControlButton>
        </WindowControls>
      </TitleBar>

      <Ribbon>
        <TabRow>
          {TABS.map((t) => <RibbonTab key={t} href="#" $active={t === "Home"} $first={t === "File"}>{t}</RibbonTab>)}
          <TabActions>
            <ActionButton>
              <Svg w={15} h={15} stroke={GREEN} strokeWidth={1.2}><path d="M4 6H1v8h11v-4M4 11c0-4 3-6 6-6V8l4-4-4-3v2C6 3 4 6 4 11z" /></Svg>
              Share
            </ActionButton>
            <ActionButton>
              <Svg w={14} h={13} stroke={GREEN} strokeWidth={1.2}><path d="M1 1h12v8H6l-3 3V9H1z" /></Svg>
              Comments
            </ActionButton>
          </TabActions>
        </TabRow>

        <Groups>
          <Group $w={205}>
            <GroupBody $pad={12}>
              <Large w={48} icon={<PasteIcon />} lines={["Paste", ""]} drop />
              <Stack $left={6}>
                <SmallButton $h={30}><IconSlot><CutIcon /></IconSlot>Cut</SmallButton>
                <Row $h={30}>
                  <SmallButton $h={30}><IconSlot><CopyIcon /></IconSlot>Copy</SmallButton>
                  <Drop label="Copy options" w={34} />
                </Row>
                <SmallButton $h={30}><IconSlot><BrushIcon /></IconSlot>Format Painter</SmallButton>
              </Stack>
            </GroupBody>
            <Foot name="Clipboard" launch />
          </Group>
          <Group $w={282}>
            <GroupBody $pad={10}>
              <Stack $top={10} $gap={10}>
                <Row>
                  <Combo $w={144}><select aria-label="Font"><option>Calibri Light</option></select><Chevron /></Combo>
                  <Combo $w={62}><select aria-label="Font size"><option>11</option></select><Chevron /></Combo>
                  <ToolButton aria-label="Increase font size"><GrowFont /></ToolButton>
                  <ToolButton aria-label="Decrease font size"><GrowFont shrink /></ToolButton>
                </Row>
                <Row>
                  <ToolButton aria-label="Bold"><Glyph $kind="bold">B</Glyph></ToolButton>
                  <ToolButton aria-label="Italic"><Glyph $kind="italic">I</Glyph></ToolButton>
                  <ToolButton aria-label="Underline"><Glyph $kind="underline">U</Glyph></ToolButton>
                  <Drop label="Underline styles" />
                  <Divider />
                  <ToolButton aria-label="Borders"><BordersIcon /></ToolButton>
                  <Drop label="Border styles" />
                  <Divider />
                  <ToolButton $w={30} aria-label="Fill color"><FillColor /></ToolButton>
                  <Drop label="Fill colors" />
                  <ToolButton $w={30} aria-label="Font color"><FontColor /></ToolButton>
                  <Drop label="Font colors" />
                </Row>
              </Stack>
            </GroupBody>
            <Foot name="Font" launch />
          </Group>
          <Group $w={343}>
            <GroupBody $pad={10}>
              <Stack $top={10} $gap={10}>
                <Row>
                  <ToolButton aria-label="Top align"><Lines rows={[[2, 0, 18], [7, 3, 15], [12, 0, 18]]} /></ToolButton>
                  <ToolButton aria-label="Middle align"><Lines rows={[[4, 0, 18], [9, 3, 15], [14, 0, 18]]} /></ToolButton>
                  <ToolButton $on aria-label="Bottom align"><Lines rows={[[7, 0, 18], [12, 3, 15], [17, 0, 18]]} /></ToolButton>
                  <Divider />
                  <ToolButton aria-label="Orientation"><OrientIcon /></ToolButton>
                  <Drop label="Orientation list" w={14} />
                </Row>
                <Row>
                  <ToolButton aria-label="Align left"><Lines rows={[[1, 0, 18], [6, 0, 12], [11, 0, 18], [16, 0, 12]]} /></ToolButton>
                  <ToolButton aria-label="Center"><Lines rows={[[1, 0, 18], [6, 3, 15], [11, 0, 18], [16, 3, 15]]} /></ToolButton>
                  <ToolButton aria-label="Align right"><Lines rows={[[1, 0, 18], [6, 6, 18], [11, 0, 18], [16, 6, 18]]} /></ToolButton>
                  <Divider />
                  <ToolButton aria-label="Decrease indent"><IndentIcon /></ToolButton>
                  <ToolButton aria-label="Increase indent"><IndentIcon right /></ToolButton>
                </Row>
              </Stack>
              <Stack $top={7}><Divider $h={74} /></Stack>
              <Stack $top={10} $gap={10} $left={6}>
                <SmallButton $h={29}><IconSlot><WrapIcon /></IconSlot>Wrap Text</SmallButton>
                <Row>
                  <SmallButton $h={29}><IconSlot><MergeIcon /></IconSlot>Merge &amp; Center</SmallButton>
                  <Drop label="Merge options" w={38} />
                </Row>
              </Stack>
            </GroupBody>
            <Foot name="Alignment" launch />
          </Group>
          <Group $w={188}>
            <GroupBody $pad={10}>
              <Stack $top={10} $gap={10}>
                <Combo $w={168}><select aria-label="Number format"><option>General</option></select><Chevron /></Combo>
                <Row>
                  <ToolButton aria-label="Currency format"><Glyph $kind="symbol">$</Glyph></ToolButton>
                  <Drop label="Currency list" />
                  <ToolButton aria-label="Percent style"><Glyph $kind="symbol">%</Glyph></ToolButton>
                  <ToolButton aria-label="Comma style">
                    <Svg w={11} h={16} stroke="none"><path d="M5 0c4 0 6 3 5 7s-4 7-8 8v-1c3-1 5-3 5-6-4 2-7 0-7-3s2-5 5-5z" fill="#333" /></Svg>
                  </ToolButton>
                  <Divider />
                  <ToolButton aria-label="Increase decimal"><DecimalIcon /></ToolButton>
                  <ToolButton aria-label="Decrease decimal"><DecimalIcon less /></ToolButton>
                </Row>
              </Stack>
            </GroupBody>
            <Foot name="Number" launch />
          </Group>
          <Group $w={239}>
            <GroupBody $pad={10}>
              <Large w={92} icon={<ConditionalIcon />} lines={["Conditional", "Formatting"]} drop />
              <Large w={70} icon={<FormatTableIcon />} lines={["Format as", "Table"]} drop />
              <Large w={58} icon={<CellStylesIcon />} lines={["Cell", "Styles"]} drop />
            </GroupBody>
            <Foot name="Styles" />
          </Group>
          <Group $w={176}>
            <GroupBody $pad={10}>
              <Large w={52} icon={<InsertIcon />} lines={["Insert", ""]} drop />
              <Large w={52} icon={<DeleteIcon />} lines={["Delete", ""]} drop />
              <Large w={52} icon={<FormatIcon />} lines={["Format", ""]} drop />
            </GroupBody>
            <Foot name="Cells" />
          </Group>
          <Group $w={249}>
            <GroupBody $pad={14}>
              <Stack>
                <Row $h={26}>
                  <SmallButton $h={26}><IconSlot><SigmaIcon /></IconSlot>AutoSum</SmallButton>
                  <Drop label="AutoSum list" w={34} />
                </Row>
                <SmallButton $h={29}><IconSlot><FillIcon /></IconSlot>Fill <Chevron /></SmallButton>
                <SmallButton $h={29}><IconSlot><EraserIcon /></IconSlot>Clear <Chevron /></SmallButton>
              </Stack>
              <Large w={44} icon={<SortIcon />} lines={["Sort &", "Filter"]} drop />
              <Large w={64} icon={<FindIcon />} lines={["Find &", "Select"]} drop />
            </GroupBody>
            <Foot name="Editing" />
          </Group>
          <Group $w={72}>
            <GroupBody $pad={6}>
              <Large w={60} icon={<BoltIcon />} lines={["Ideas"]} />
            </GroupBody>
            <Foot name="Ideas" />
          </Group>
          <CollapseButton aria-label="Collapse ribbon"><Svg w={12} h={8}><path d="M1 7l5-5 5 5" /></Svg></CollapseButton>
        </Groups>
      </Ribbon>

      <FormulaBar>
        <NameBox><input defaultValue="P22" aria-label="Name box" /><Svg w={8} h={5} stroke="none"><path d="M0 0h8L4 4z" fill="#777" /></Svg></NameBox>
        <Stack $top={8}><Grip $m={17} /></Stack>
        <FormulaButtons>
          <button aria-label="Cancel"><Svg w={16} h={14} stroke="#bbb" strokeWidth={2}><path d="M1 1l13 12M14 1L1 13" /></Svg></button>
          <button aria-label="Enter"><Svg w={17} h={14} stroke="#c0c0c0" strokeWidth={3}><path d="M1 7l5 5L16 1" /></Svg></button>
          <button aria-label="Insert function"><Functions>f<small>x</small></Functions></button>
        </FormulaButtons>
        <FormulaInput>
          <textarea aria-label="Formula" />
          <button aria-label="Collapse formula bar"><Svg w={10} h={7} stroke="#777" strokeWidth={2.4}><path d="M1 6l4-4 4 4" /></Svg></button>
        </FormulaInput>
      </FormulaBar>

      <Workspace>
        <Spreadsheet />
        <ScrollColumn>
          <ScrollButton aria-label="Scroll up"><Triangle dir="up" /></ScrollButton>
          <ScrollThumb $grow={655} />
          <ScrollGap $grow={24} />
          <ScrollButton aria-label="Scroll down"><Triangle dir="down" /></ScrollButton>
        </ScrollColumn>
      </Workspace>

      <BottomBar>
        <TabNav>
          <Triangle dir="left" color="#c0c0c0" />
          <Triangle dir="right" color="#c0c0c0" />
        </TabNav>
        <SheetTabs>
          <TabRule />
          <SheetTab href="#">Market Data</SheetTab>
          <SheetTab href="#" $active>Calculator</SheetTab>
          <SheetTab href="#">Data - Data Feed Market</SheetTab>
          <TabRule />
          <SheetTab href="#">Data - Pip Values</SheetTab>
          <TabRule />
          <SheetTab href="#">Data - DDE</SheetTab>
          <TabRule />
        </SheetTabs>
        <AddSheet aria-label="New sheet"><Svg w={20} h={20} stroke="#777"><circle cx="10" cy="10" r="9" /><path d="M10 5v10M5 10h10" strokeWidth={2} /></Svg></AddSheet>
        <HorizontalScroll>
          <Grip $m={0} />
          <HorizontalTrack>
            <ScrollButton aria-label="Scroll left"><Triangle dir="left" /></ScrollButton>
            <ScrollThumb $grow={306} />
            <ScrollGap $grow={14} />
            <ScrollButton aria-label="Scroll right"><Triangle dir="right" /></ScrollButton>
          </HorizontalTrack>
        </HorizontalScroll>
      </BottomBar>

      <StatusBar>
        <button aria-label="Record macro">
          <Svg w={19} h={18} stroke="#555"><path d="M8 16H1V1h16v5M1 4h16M3 7h4M3 10h3M3 13h3" /><circle cx="12.500" cy="12" r="5" /><circle cx="12.500" cy="12" r="2" fill="#555" /></Svg>
        </button>
        <ViewButtons>
          <ViewButton $on aria-label="Normal view"><Svg w={17} h={17}><path d="M1 1h15v15H1zM1 6h15M1 11h15M6 1v15M11 1v15" /></Svg></ViewButton>
          <ViewButton aria-label="Page layout view"><Svg w={18} h={17}><path d="M1 1h16v15H1zM4.500 4h9v9h-9zM6.500 6.500h5M6.500 8.500h5M6.500 10.500h5" /></Svg></ViewButton>
          <ViewButton aria-label="Page break view"><Svg w={18} h={17}><path d="M1 1h16v15H1zM1 9h11V1M6 1v8" /></Svg></ViewButton>
        </ViewButtons>
        <Zoom>
          <button aria-label="Zoom out"><Svg w={10} h={10}><path d="M0 5h10" /></Svg></button>
          <input type="range" min={0} max={200} defaultValue={100} aria-label="Zoom" />
          <button aria-label="Zoom in"><Svg w={10} h={10}><path d="M0 5h10M5 0v10" /></Svg></button>
        </Zoom>
        <ZoomLevel>100%</ZoomLevel>
      </StatusBar>
      <Taskbar />
    </Window>
  );
}
